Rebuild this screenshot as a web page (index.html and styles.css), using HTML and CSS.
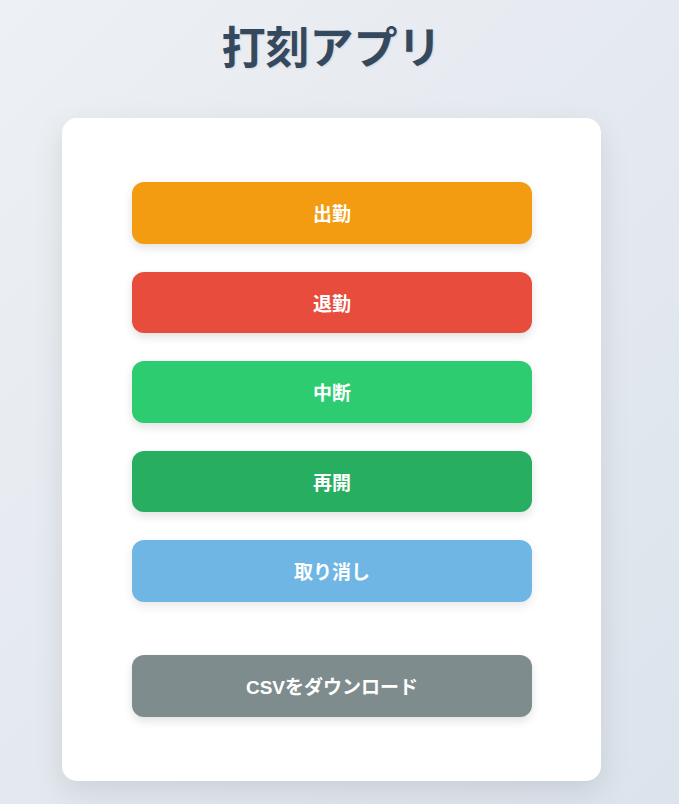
FILE: index.html
```html
<!DOCTYPE html>
<html lang="ja">
<head>
<meta charset="utf-8">
<title>打刻アプリ</title>
<link rel="stylesheet" href="styles.css">
</head>
<body>
<main class="app">
  <h1 class="title">打刻アプリ</h1>
  <section class="card">
    <div class="actions">
      <button class="btn btn-in">出勤</button>
      <button class="btn btn-out">退勤</button>
      <button class="btn btn-pause">中断</button>
      <button class="btn btn-resume">再開</button>
      <button class="btn btn-undo">取り消し</button>
    </div>
    <button class="btn btn-csv">CSVをダウンロード</button>
  </section>
</main>
</body>
</html>
```
FILE: styles.css
```css
* { box-sizing: border-box; }
html, body { height: 100%; }
body {
  margin: 0;
  background: linear-gradient(135deg, #edf0f4 0%, #dce3ec 100%);
  font-family: "Liberation Sans", "Noto Sans CJK JP", sans-serif;
  overflow: hidden;
}
.app {
  width: 539px;
  margin-left: 62px;
  display: flex;
  flex-direction: column;
  align-items: center;
}
.title {
  margin: 13px 0 41px;
  font-family: "Noto Sans CJK JP", sans-serif;
  font-size: 44px;
  font-weight: 700;
  line-height: 64px;
  color: #34495e;
  text-shadow: 1px 1px 2px rgba(0, 0, 0, 0.1);
}
.card {
  width: 539px;
  background: #fff;
  border-radius: 15px;
  box-shadow: 0 10px 30px rgba(0, 0, 0, 0.1);
  padding: 64px 69px 64px 70px;
  display: flex;
  flex-direction: column;
  gap: 53.5px;
}
.actions {
  display: flex;
  flex-direction: column;
  gap: 28px;
}
.btn {
  display: block;
  width: 400px;
  height: 61.5px;
  border: none;
  border-radius: 12px;
  color: #fff;
  font-family: "Liberation Sans", "Noto Sans CJK JP", sans-serif;
  font-size: 19px;
  font-weight: 700;
  box-shadow: 0 4px 10px rgba(0, 0, 0, 0.12);
  cursor: pointer;
}
.btn-in { background: #f39c12; }
.btn-out { background: #e74c3c; }
.btn-pause { background: #2ecc71; }
.btn-resume { background: #27ae60; }
.btn-undo { background: #3498db; opacity: 0.7; }
.btn-csv { background: #7f8c8d; }
```
